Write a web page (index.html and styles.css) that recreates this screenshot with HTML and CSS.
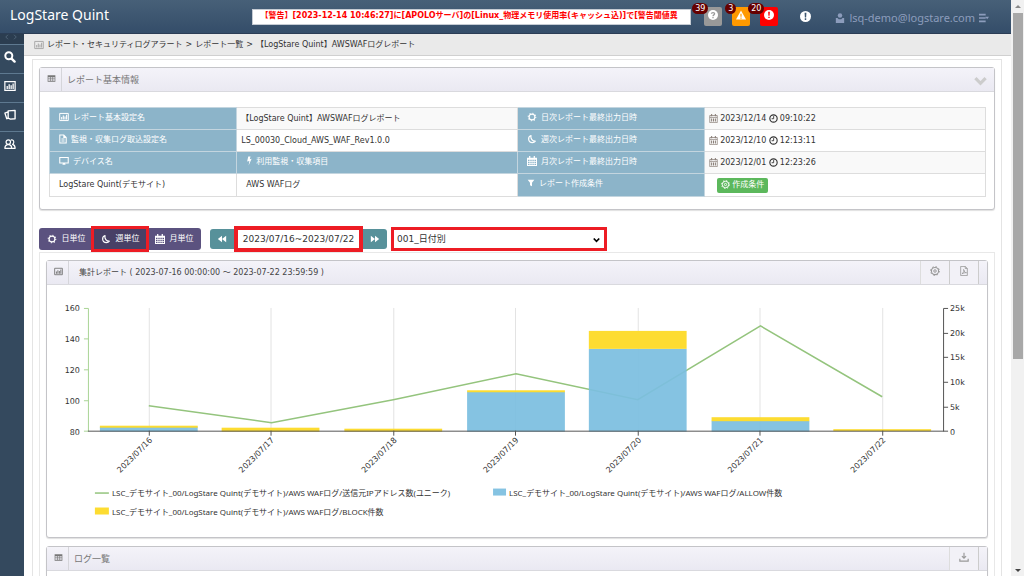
FILE: index.html
```html
<!DOCTYPE html>
<html lang="ja">
<head>
	<meta charset="UTF-8">
	<title>LogStare Quint</title>
	<link rel="stylesheet" href="styles.css">
</head>
<body>
	<!--アイコン定義-->
	<svg class="defs" width="0" height="0" aria-hidden="true">
		<symbol id="i-chart" viewBox="0 0 14 12"><path fill="none" stroke="currentColor" stroke-width="1.4" d="M1 1h12v10H1z"/><path fill="currentColor" d="M3 6h1.5v3.5H3zM5.300 4h1.500v5.500H5.300zM7.600 5.200h1.500v4.300H7.600zM9.900 3h1.500v6.500H9.900z"/></symbol>
		<symbol id="i-table" viewBox="0 0 14 12"><path fill="currentColor" fill-rule="evenodd" d="M1 1h12v10H1zM2 4v1.500h3V4zM6 4v1.500h2.500V4zM9.500 4v1.500h2.500V4zM2 6.400v1.400h3V6.400zM6 6.400v1.400h2.500V6.400zM9.500 6.400v1.400h2.500V6.400zM2 8.700V10h3V8.700zM6 8.700V10h2.500V8.700zM9.500 8.700V10h2.500V8.700z"/></symbol>
		<symbol id="i-search" viewBox="0 0 12 12"><circle cx="4.800" cy="4.800" r="3.500" fill="none" stroke="currentColor" stroke-width="2"/><path stroke="currentColor" stroke-width="2.400" stroke-linecap="round" d="M7.800 7.800l2.800 2.800"/></symbol>
		<symbol id="i-cards" viewBox="0 0 13 12"><path fill="none" stroke="currentColor" stroke-width="1.500" stroke-linejoin="round" d="M4.500 1.500l7.500-.5v9l-5 .5-2.500-1zM4.500 2.500L1 4l2 6 1.500-.5"/></symbol>
		<symbol id="i-users" viewBox="0 0 14 12"><g fill="none" stroke="currentColor" stroke-width="1.400" stroke-linejoin="round"><circle cx="5" cy="3.800" r="2.600"/><path d="M1 11c0-3 1.500-3.800 3-4.200h2c2 .4 3 1.500 3 4.200zM8 1.200c2.500-.4 3.500 1 3.400 2.800-.1 1.200-.8 2-1.400 2.400 2 .6 3 1.800 3 4.600H9"/></g></symbol>
		<symbol id="i-doc" viewBox="0 0 10 12"><path fill="none" stroke="currentColor" stroke-width="1.300" d="M1 1h5l3 3v7H1zM6 1v3h3M3 6h4M3 8.500h4"/></symbol>
		<symbol id="i-monitor" viewBox="0 0 13 12"><path fill="none" stroke="currentColor" stroke-width="1.400" d="M1 1.500h11v7H1z"/><path fill="currentColor" d="M5 8.500h3l.5 2.500h-4z"/></symbol>
		<symbol id="i-bolt" viewBox="0 0 8 12"><path fill="currentColor" d="M3 0h3L5 3.500l2.500-.5L3.500 12l1-6L1.500 6.500z"/></symbol>
		<symbol id="i-sun" viewBox="0 0 12 12"><circle cx="6" cy="6" r="3.500" fill="none" stroke="currentColor" stroke-width="1.400"/><circle cx="6" cy="6" r="4.500" fill="none" stroke="currentColor" stroke-width="1.400" stroke-dasharray="1.200 2.334"/></symbol>
		<symbol id="i-moon" viewBox="0 0 12 12"><path fill="none" stroke="currentColor" stroke-width="1.400" stroke-linejoin="round" d="M4.800 1.800C2.800 2.500 1.700 4.300 2 6.500 2.300 9 4.300 10.300 6.500 10.300c1.500 0 2.700-.6 3.500-1.700C6.500 8.700 4 5.500 4.800 1.800z"/></symbol>
		<symbol id="i-cal" viewBox="0 0 12 12"><path fill="currentColor" fill-rule="evenodd" d="M0 2h2.500V0h1.500v2h4V0h1.500v2H12v10H0zM1.200 4.500v1.600H3V4.500zM4 4.500v1.600h1.600V4.500zM6.500 4.500v1.600h1.600V4.500zM9 4.500v1.600h1.800V4.500zM1.200 7v1.500H3V7zM4 7v1.500h1.600V7zM6.500 7v1.500h1.600V7zM9 7v1.500h1.800V7zM1.200 9.400v1.400H3V9.400zM4 9.400v1.400h1.600V9.400zM6.500 9.400v1.400h1.600V9.400zM9 9.400v1.400h1.800V9.400z"/></symbol>
		<symbol id="i-date" viewBox="0 0 12 12"><path fill="none" stroke="#8a7f78" d="M1 2h10v9.500H1zM1 4.500h10"/><path stroke="#8a7f78" stroke-width="1.400" d="M3.500 0v3M8.500 0v3M3.500 6v4M6 6v4M8.500 6v4"/></symbol>
		<symbol id="i-clock" viewBox="0 0 12 12"><circle cx="6" cy="6" r="4.900" fill="none" stroke="currentColor" stroke-width="1.500"/><path fill="none" stroke="currentColor" stroke-width="1.200" d="M6.200 2.800v3.500H3.500"/></symbol>
		<symbol id="i-filter" viewBox="0 0 12 12"><path fill="currentColor" d="M1 1h10L7.500 5.500V11l-3-1.500v-4z"/></symbol>
		<symbol id="i-gear" viewBox="0 0 12 12"><circle cx="6" cy="6" r="4.300" fill="none" stroke="currentColor" stroke-width="1.300"/><circle cx="6" cy="6" r="5.300" fill="none" stroke="currentColor" stroke-width="1.200" stroke-dasharray="1.800 2.363"/><circle cx="6" cy="6" r="1.500" fill="none" stroke="currentColor" stroke-width="1.200"/></symbol>
		<symbol id="i-pdf" viewBox="0 0 10 12"><path fill="none" stroke="currentColor" d="M1 .5h5.500L9 3v8.500H1zM6.500.5V3H9M2.500 9.500C4.500 8 5.500 5.500 4.500 4.200c1 3 2 3.800 3.500 3.800-2 0-4 .3-5.500 1.500z"/></symbol>
		<symbol id="i-download" viewBox="0 0 12 12"><path fill="none" stroke="currentColor" stroke-width="1.400" d="M6 1v6M3.500 5L6 7.500 8.500 5M1 8v3h10V8"/></symbol>
		<symbol id="i-back" viewBox="0 0 12 10"><path fill="currentColor" d="M6 1v8L1 5zM11 1v8L6 5z"/></symbol>
		<symbol id="i-next" viewBox="0 0 12 10"><path fill="currentColor" d="M1 1l5 4-5 4zM6 1l5 4-5 4z"/></symbol>
		<symbol id="i-person" viewBox="0 0 12 12"><circle cx="6" cy="3" r="2.700" fill="currentColor"/><path fill="currentColor" d="M1 6h2l1.500 1.500h3L9 6h2v6H1z"/></symbol>
		<symbol id="i-menu" viewBox="0 0 12 10"><path fill="currentColor" d="M0 0h8v2H0zM0 4h8v2H0zM0 8h8v2H0zM7.500 3.500h4.500L9.800 6.500z"/></symbol>
		<symbol id="i-info" viewBox="0 0 12 12"><circle cx="6" cy="6" r="6" fill="#fff"/><path fill="currentColor" d="M5 2h2l-.3 5H5.300zM5.200 8h1.600v1.700H5.200z"/></symbol>
		<symbol id="i-help" viewBox="0 0 12 12"><circle cx="6" cy="6" r="6" fill="#fff"/><path fill="none" stroke="currentColor" stroke-width="1.500" d="M4 4.500C4.200 2.500 8 2.500 8 4.500 8 6 6 5.700 6 7.500M6 8.500V10"/></symbol>
		<symbol id="i-warn" viewBox="0 0 12 12"><path fill="#fff" d="M6 .5L12 11.500H0z"/><path fill="currentColor" d="M5.300 4.500h1.400v3.500H5.300zM5.300 9h1.400v1.400H5.300z"/></symbol>
		<symbol id="i-chevron" viewBox="0 0 14 10"><path fill="none" stroke="currentColor" stroke-width="3.400" d="M1.500 2L7 7.500 12.500 2"/></symbol>
		<symbol id="i-toggle" viewBox="0 0 16 8"><path fill="none" stroke="currentColor" stroke-width="1.300" d="M4 1L1 4l3 3M12 1l3 3-3 3"/></symbol>
	</svg>

	<div class="window">
		<div class="app">
			<header class="topbar">
				<div class="brand">LogStare Quint</div>
				<div class="ticker"><p>【警告】[2023-12-14 10:46:27]に[APOLOサーバ]の[Linux_物理メモリ使用率(キャッシュ込)]で[警告閾値異</p></div>
				<nav class="alerts">
					<a href="#" class="alert gray" aria-label="不明"><svg><use href="#i-help"/></svg><span class="badge">39</span></a>
					<a href="#" class="alert orange" aria-label="警告"><svg><use href="#i-warn"/></svg><span class="badge">3</span></a>
					<a href="#" class="alert red" aria-label="障害"><svg><use href="#i-info"/></svg><span class="badge">20</span></a>
				</nav>
				<a href="#" class="notice" aria-label="お知らせ"><svg><use href="#i-info"/></svg></a>
				<a href="#" class="user"><svg><use href="#i-person"/></svg><span>lsq-demo@logstare.com</span><svg><use href="#i-menu"/></svg></a>
			</header>

			<div class="body">
				<!--サイドメニュー-->
				<nav class="side">
					<button type="button" class="toggle" aria-label="メニュー開閉"><svg><use href="#i-toggle"/></svg></button>
					<a href="#" aria-label="検索"><svg><use href="#i-search"/></svg></a>
					<a href="#" aria-label="レポート"><svg><use href="#i-chart"/></svg></a>
					<a href="#" aria-label="ログ"><svg><use href="#i-cards"/></svg></a>
					<a href="#" aria-label="ユーザ"><svg><use href="#i-users"/></svg></a>
				</nav>

				<main class="main">
					<div class="crumbs"><svg><use href="#i-chart"/></svg><a href="#">レポート・セキュリティログアラート</a><span>&gt;</span><a href="#">レポート一覧</a><span>&gt;</span><span>【LogStare Quint】AWSWAFログレポート</span></div>

					<div class="content">
						<!--レポート基本情報-->
						<section class="panel">
							<div class="panel-head">
								<span class="panel-icon"><svg><use href="#i-table"/></svg></span>
								<h2>レポート基本情報</h2>
								<button type="button" class="collapse" aria-label="閉じる"><svg><use href="#i-chevron"/></svg></button>
							</div>
							<div class="info">
								<table>
									<tr>
										<th><svg><use href="#i-chart"/></svg>レポート基本設定名</th>
										<td>【LogStare Quint】AWSWAFログレポート</td>
										<th><svg><use href="#i-sun"/></svg>日次レポート最終出力日時</th>
										<td><svg><use href="#i-date"/></svg>2023/12/14 <svg><use href="#i-clock"/></svg>09:10:22</td>
									</tr>
									<tr>
										<th><svg class="slim"><use href="#i-doc"/></svg>監視・収集ログ取込設定名</th>
										<td>LS_00030_Cloud_AWS_WAF_Rev1.0.0</td>
										<th><svg><use href="#i-moon"/></svg>週次レポート最終出力日時</th>
										<td><svg><use href="#i-date"/></svg>2023/12/10 <svg><use href="#i-clock"/></svg>12:13:11</td>
									</tr>
									<tr>
										<th><svg><use href="#i-monitor"/></svg>デバイス名</th>
										<th><svg class="thin"><use href="#i-bolt"/></svg>利用監視・収集項目</th>
										<th><svg><use href="#i-cal"/></svg>月次レポート最終出力日時</th>
										<td><svg><use href="#i-date"/></svg>2023/12/01 <svg><use href="#i-clock"/></svg>12:23:26</td>
									</tr>
									<tr class="last">
										<td class="indent">LogStare Quint(デモサイト)</td>
										<td class="indent">AWS WAFログ</td>
										<th><svg class="slim"><use href="#i-filter"/></svg>レポート作成条件</th>
										<td class="action"><button type="button" class="btn-green"><svg><use href="#i-gear"/></svg>作成条件</button></td>
									</tr>
								</table>
							</div>
						</section>

						<!--期間の切り替え-->
						<div class="tools">
							<div class="units">
								<button type="button"><svg><use href="#i-sun"/></svg>日単位</button>
								<button type="button" class="active"><svg><use href="#i-moon"/></svg>週単位</button>
								<button type="button"><svg><use href="#i-cal"/></svg>月単位</button>
							</div>
							<div class="range">
								<button type="button" class="prev" aria-label="前へ"><svg><use href="#i-back"/></svg></button>
								<input type="text" value="2023/07/16~2023/07/22" aria-label="期間">
								<button type="button" class="next" aria-label="次へ"><svg><use href="#i-next"/></svg></button>
							</div>
							<div class="pick">
								<select aria-label="レポート"><option>001_日付別</option></select>
								<svg><use href="#i-chevron"/></svg>
							</div>
						</div>

						<div class="tab">
							<section class="panel">
								<div class="panel-head">
									<span class="panel-icon"><svg><use href="#i-chart"/></svg></span>
									<h2 class="dark">集計レポート ( 2023-07-16 00:00:00 ～ 2023-07-22 23:59:59 )</h2>
									<div class="head-tools">
										<button type="button" aria-label="設定"><svg><use href="#i-gear"/></svg></button>
										<button type="button" aria-label="PDF"><svg><use href="#i-pdf"/></svg></button>
									</div>
								</div>
								<svg class="chart" viewBox="0 0 942 253">
									<path class="grid" d="M102.500 23v123M224.500 23v123M347.500 23v123M469.500 23v123M592.500 23v123M714.500 23v123M837.500 23v123"/>
									<polyline class="line" points="102,121 225,138 347,115 470,89 592,115 715,41 837,112"/>
									<g class="allow">
										<rect x="53" y="142" width="98" height="5"/>
										<rect x="421" y="107" width="98" height="40"/>
										<rect x="543" y="64" width="98" height="83"/>
										<rect x="666" y="136" width="98" height="11"/>
									</g>
									<g class="block">
										<rect x="53" y="141" width="98" height="2"/>
										<rect x="175" y="143" width="98" height="4"/>
										<rect x="298" y="144" width="98" height="3"/>
										<rect x="421" y="105.500" width="98" height="2"/>
										<rect x="543" y="46" width="98" height="18"/>
										<rect x="666" y="132.500" width="98" height="4"/>
										<rect x="788" y="144.500" width="98" height="2"/>
									</g>
									<path class="axis-l" d="M37 23.500h4.500v123H37M37 54h4.500M37 85h4.500M37 116h4.500"/>
									<path class="axis-b" d="M41 146.500h858M102.500 146v5M224.500 146v5M347.500 146v5M469.500 146v5M592.500 146v5M714.500 146v5M837.500 146v5"/>
									<path class="axis-r" d="M903 23.500h-4.500v123h4.500M898 48.500h5M898 72.500h5M898 97.500h5M898 122.500h5"/>
									<g class="num end">
										<text x="33" y="26">160</text>
										<text x="33" y="57">140</text>
										<text x="33" y="88">120</text>
										<text x="33" y="119">100</text>
										<text x="33" y="150">80</text>
									</g>
									<g class="num">
										<text x="905" y="26">25k</text>
										<text x="905" y="51">20k</text>
										<text x="905" y="75">15k</text>
										<text x="905" y="100">10k</text>
										<text x="905" y="125">5k</text>
										<text x="905" y="150">0</text>
									</g>
									<g class="date end">
										<text transform="translate(106 156) rotate(-45)">2023/07/16</text>
										<text transform="translate(228 156) rotate(-45)">2023/07/17</text>
										<text transform="translate(351 156) rotate(-45)">2023/07/18</text>
										<text transform="translate(473 156) rotate(-45)">2023/07/19</text>
										<text transform="translate(596 156) rotate(-45)">2023/07/20</text>
										<text transform="translate(718 156) rotate(-45)">2023/07/21</text>
										<text transform="translate(841 156) rotate(-45)">2023/07/22</text>
									</g>
									<path class="line" d="M48 208.500h14"/>
									<rect class="allow" x="447" y="204" width="13" height="7"/>
									<rect class="block" x="48" y="223" width="14" height="7"/>
									<g class="legend">
										<text x="65" y="211">LSC_デモサイト_00/LogStare Quint(デモサイト)/AWS WAFログ/送信元IPアドレス数(ユニーク)</text>
										<text x="463" y="211">LSC_デモサイト_00/LogStare Quint(デモサイト)/AWS WAFログ/ALLOW件数</text>
										<text x="65" y="230">LSC_デモサイト_00/LogStare Quint(デモサイト)/AWS WAFログ/BLOCK件数</text>
									</g>
								</svg>
							</section>

							<section class="panel logs">
								<div class="panel-head">
									<span class="panel-icon"><svg><use href="#i-table"/></svg></span>
									<h2>ログ一覧</h2>
									<div class="head-tools">
										<button type="button" aria-label="ダウンロード"><svg><use href="#i-download"/></svg></button>
									</div>
								</div>
							</section>
						</div>
					</div>
				</main>
			</div>
		</div>
		<!--スクロールバー-->
		<div class="scroll" aria-hidden="true">
			<i class="up"></i>
			<i class="thumb"></i>
			<i class="down"></i>
		</div>
	</div>
</body>
</html>
```

FILE: styles.css
```css
*{
	box-sizing: border-box;
	margin: 0;
	padding: 0;
}
body{
	height: 100vh;
	overflow: hidden;
	background-color: #fff;
	color: #333;
	font: 8px/12px "DejaVu Sans", "Noto Sans CJK JP", sans-serif;
}
button, input, select{
	border: 0;
	border-radius: 0;
	font: inherit;
	color: inherit;
	background: none;
}
a{
	color: inherit;
	text-decoration: none;
}
svg{
	display: block;
	flex: none;
	width: 10px;
	height: 10px;
}
.defs{
	position: absolute;
}
.window{
	display: flex;
	height: 100vh;
}
.app{
	flex: 1;
	min-width: 0;
	display: flex;
	flex-direction: column;
}

/*ヘッダー*/
.topbar{
	flex: none;
	display: flex;
	align-items: center;
	height: 34px;
	padding: 0 22px 0 10px;
	background: linear-gradient(#476078, #344d69);
	border-bottom: 1px solid #2b3d55;
}
.brand{
	margin-bottom: 3px;
	color: #fff;
	font: 14px/20px "Noto Sans", sans-serif;
}
.ticker{
	width: 439px;
	height: 16px;
	margin-left: auto;
	padding: 0 1px 0 7px;
	background-color: #fff;
	border: 1px solid #c5cbd3;
}
.ticker p{
	overflow: hidden;
	white-space: nowrap;
	line-height: 12px;
	font-weight: bold;
	color: #f00;
}
.alerts{
	display: flex;
	gap: 10px;
	margin-left: 13px;
}
.alert{
	position: relative;
	display: flex;
	justify-content: center;
	width: 18px;
	height: 19px;
	padding-top: 3px;
	border-radius: 2px;
}
.gray{
	background-color: #999;
	color: #999;
}
.orange{
	background-color: #f90;
	color: #f90;
}
.red{
	background-color: #f00;
	color: #f00;
}
.badge{
	position: absolute;
	right: 14px;
	top: -4px;
	padding: 0 3px;
	border-radius: 6px;
	background-color: #600;
	color: #fff;
	line-height: 11px;
}
.notice{
	margin-left: 22px;
	color: #3d5670;
}
.notice svg{
	width: 11px;
	height: 11px;
}
.user{
	display: flex;
	align-items: center;
	gap: 4px;
	margin-left: 24px;
	padding-top: 2px;
	color: #8c9cbc;
	font: 11px/16px "Noto Sans", sans-serif;
}

/*サイドメニュー*/
.body{
	flex: 1;
	min-height: 0;
	display: flex;
}
.side{
	flex: none;
	width: 24px;
	background-color: #34495e;
	color: #fff;
}
.side a{
	display: flex;
	align-items: center;
	height: 29px;
	padding: 0 4px 4px;
	border-top: 1px solid #5e7990;
}
.side svg{
	width: 12px;
	height: 12px;
}
.toggle{
	display: flex;
	align-items: flex-start;
	width: 100%;
	height: 10px;
	padding-left: 3px;
	background-color: #2b3d50;
	color: #4f6377;
}
.toggle svg{
	width: 16px;
	height: 6px;
}
.main{
	flex: 1;
	min-width: 0;
}
.crumbs{
	display: flex;
	align-items: center;
	gap: 3px;
	height: 22px;
	padding-left: 10px;
	background-color: #eaeaea;
	border-bottom: 1px solid #d0d0d0;
}
.crumbs svg{
	color: #aaa;
}
.content{
	margin: 3px 9px 0 8px;
	padding: 7px 6px 0;
	border: 1px solid #e4e4e4;
	border-bottom: 0;
}

/*パネル*/
.panel{
	border: 1px solid #c4c4c8;
	border-radius: 3px;
	background-color: #fff;
	box-shadow: 0 1px 1px #e0e0e0;
}
.panel-head{
	display: flex;
	align-items: center;
	height: 24px;
	border-bottom: 1px solid #d9d9de;
	background: linear-gradient(#f4f3f9, #eae9f2);
}
.panel-icon{
	display: flex;
	align-items: center;
	align-self: stretch;
	width: 22px;
	padding: 0 0 2px 7px;
	border-right: 1px solid #d5d5da;
	color: #777;
}
.panel-icon svg{
	width: 9px;
	height: 9px;
}
.panel-head h2{
	padding-left: 5px;
	font-size: 9px;
	font-weight: normal;
	color: #777;
}
.panel-head .dark{
	padding-left: 10px;
	font-size: 8px;
	color: #444;
}
.collapse{
	margin-left: auto;
	padding: 2px 7px 0 0;
	color: #ccc;
}
.collapse svg{
	width: 13px;
}
.head-tools{
	display: flex;
	align-self: stretch;
	margin-left: auto;
	margin-right: 8px;
	border-left: 1px solid #ddd;
}
.head-tools button{
	display: flex;
	align-items: center;
	justify-content: center;
	width: 29px;
	padding-bottom: 3px;
	border-right: 1px solid #ccc;
	background-color: #f2f1f7;
	color: #999;
}

/*基本情報の表*/
.info{
	padding: 15px 8px 12px 9px;
}
.info table{
	width: 100%;
	table-layout: fixed;
	border-collapse: collapse;
}
.info th, .info td{
	width: 30%;
	height: 22px;
	padding-left: 4px;
	border: 1px solid #ddd;
	text-align: left;
	font-weight: normal;
}
.info tr > :nth-child(odd){
	width: 20%;
}
.info th{
	padding: 0 0 2px 9px;
	background-color: #8cb4c9;
	border-color: #c3d5df;
	color: #fff;
}
.info tr:nth-child(odd) td{
	background-color: #f9f9f9;
}
.info svg{
	display: inline-block;
	vertical-align: -2px;
	margin-right: 4px;
}
.info .slim{
	width: 8px;
}
.info .thin{
	width: 6px;
}
.info td svg{
	width: 9px;
	height: 9px;
	margin-right: 2px;
}
.info .last > *{
	height: 23px;
}
.info .indent{
	padding-left: 9px;
}
.info .action{
	padding-left: 12px;
}
.btn-green{
	height: 15px;
	padding: 0 4px;
	border-radius: 2px;
	background-color: #5cb85c;
	color: #fff;
}

/*切り替えボタン*/
.tools{
	display: flex;
	align-items: center;
	height: 26px;
	margin-top: 16px;
}
.units{
	display: flex;
}
.units button{
	display: flex;
	align-items: center;
	justify-content: center;
	gap: 5px;
	width: 54px;
	height: 22px;
	background-color: #5b527f;
	color: #fff;
}
.units button:first-child{
	border-radius: 3px 0 0 3px;
}
.units button:last-child{
	border-radius: 0 3px 3px 0;
}
.units .active{
	z-index: 1;
	background-color: #484066;
	outline: 3px solid #ed1c24;
	outline-offset: -1px;
}
.range{
	display: flex;
	align-items: center;
	margin-left: 9px;
}
.range button{
	display: flex;
	align-items: center;
	justify-content: center;
	width: 24px;
	height: 20px;
	background-color: #57919a;
	color: #fff;
}
.range .prev{
	border-radius: 3px 0 0 3px;
}
.range .next{
	border-radius: 0 3px 3px 0;
}
.range input{
	width: 129px;
	height: 26px;
	border: 4px solid #ed1c24;
	text-align: center;
	font-size: 9px;
}
.pick{
	position: relative;
	margin-left: 4px;
}
.pick select{
	display: block;
	width: 216px;
	height: 24px;
	padding-left: 3px;
	border: 3px solid #ed1c24;
	background-color: #fff;
	font-size: 9px;
	appearance: none;
}
.pick svg{
	position: absolute;
	right: 7px;
	top: 10px;
	width: 7px;
	height: 6px;
	color: #000;
}
.tab{
	padding: 7px 6px 0;
	border: 1px solid #e8e8e8;
	border-bottom: 0;
}
.chart{
	width: 100%;
	height: auto;
}
.grid{
	fill: none;
	stroke: #e3e3e3;
}
.line{
	fill: none;
	stroke: #94c47d;
	stroke-width: 1.500px;
}
.allow{
	fill: #7cbee0;
	fill-opacity: .93;
}
.block{
	fill: #fddb29;
	fill-opacity: .96;
}
.axis-l, .axis-b, .axis-r{
	fill: none;
	stroke: #555;
}
.axis-l{
	stroke: #a9d495;
}
.chart text{
	fill: #333;
}
.end{
	text-anchor: end;
}
.legend{
	font-family: "Noto Sans", "Noto Sans CJK JP", sans-serif;
}
.logs{
	height: 60px;
	margin-top: 8px;
}

/*スクロールバー*/
.scroll{
	flex: none;
	display: flex;
	flex-direction: column;
	align-items: center;
	width: 13px;
	padding: 5px 0 4px;
	background-color: #f1f1f1;
}
.up{
	border: 3px solid transparent;
	border-top: 0;
	border-bottom-color: #888;
}
.thumb{
	width: 10px;
	height: 61%;
	margin: 5px 0 auto;
	background-color: #a8a8a8;
}
.down{
	border: 3px solid transparent;
	border-bottom: 0;
	border-top-color: #444;
}
```
